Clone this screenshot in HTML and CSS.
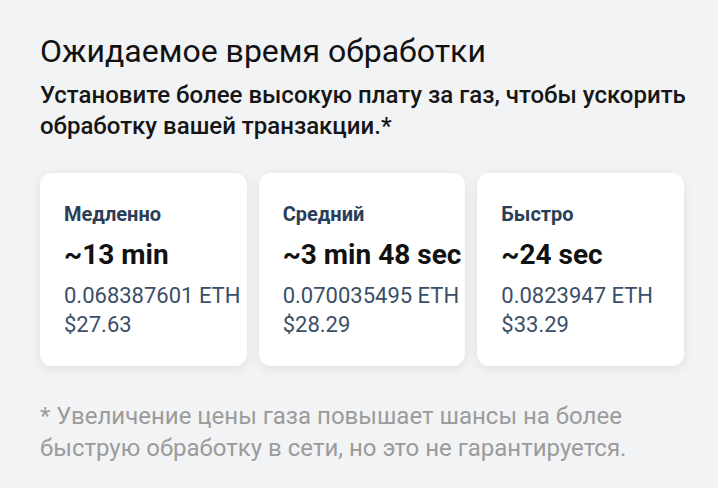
FILE: index.html
```html
<!DOCTYPE html>
<html lang="ru">
<head>
	<meta charset="UTF-8">
	<title>Ожидаемое время обработки</title>
	<link rel="stylesheet" href="styles.css">
</head>
<body>
	<div class="page">
		<h1 class="title">Ожидаемое время обработки</h1>
		<p class="lead">Установите более высокую плату за газ, чтобы ускорить обработку вашей транзакции.*</p>

		<div class="speeds">
			<div class="speed">
				<div class="speed-name">Медленно</div>
				<div class="speed-time">~13 min</div>
				<div class="speed-fee">0.068387601 ETH</div>
				<div class="speed-fee">$27.63</div>
			</div>
			<div class="speed">
				<div class="speed-name">Средний</div>
				<div class="speed-time">~3 min 48 sec</div>
				<div class="speed-fee">0.070035495 ETH</div>
				<div class="speed-fee">$28.29</div>
			</div>
			<div class="speed">
				<div class="speed-name">Быстро</div>
				<div class="speed-time">~24 sec</div>
				<div class="speed-fee">0.0823947 ETH</div>
				<div class="speed-fee">$33.29</div>
			</div>
		</div>

		<p class="note">* Увеличение цены газа повышает шансы на более быструю обработку в сети, но это не гарантируется.</p>
	</div>
</body>
</html>
```

FILE: styles.css
```css
html, body{
	margin: 0;
	padding: 0;
	background: #f2f3f5;
}
body{
	font-family: Roboto, "Noto Sans", "Liberation Sans", sans-serif;
	color: #111;
}
.page{
	padding: 31px 34px 0 40px;
}
.title{
	margin: 0;
	font-size: 32px;
	font-weight: 400;
	line-height: 40px;
	color: #111;
}
.lead{
	margin: 9px 0 0;
	font-size: 24px;
	font-weight: 500;
	line-height: 31px;
	color: #161616;
	width: 660px;
}
.speeds{
	display: flex;
	gap: 12px;
	margin-top: 31px;
}
.speed{
	flex: 1;
	height: 193px;
	box-sizing: border-box;
	padding: 28px 0 0 24px;
	background: #fff;
	border-radius: 12px;
	box-shadow: 0 3px 12px rgba(0,0,0,0.08);
	white-space: nowrap;
}
.speed-name{
	font-size: 20px;
	font-weight: 700;
	line-height: 26px;
	color: #2b3e57;
}
.speed-time{
	margin-top: 11px;
	font-size: 28px;
	font-weight: 700;
	line-height: 34px;
	color: #111;
}
.speed-fee{
	font-size: 22px;
	line-height: 29px;
	color: #3b4f68;
}
.speed-time + .speed-fee{
	margin-top: 9px;
}
.note{
	margin: 34px 0 0;
	font-size: 24px;
	line-height: 32px;
	color: #9b9b9b;
	width: 620px;
}
```
